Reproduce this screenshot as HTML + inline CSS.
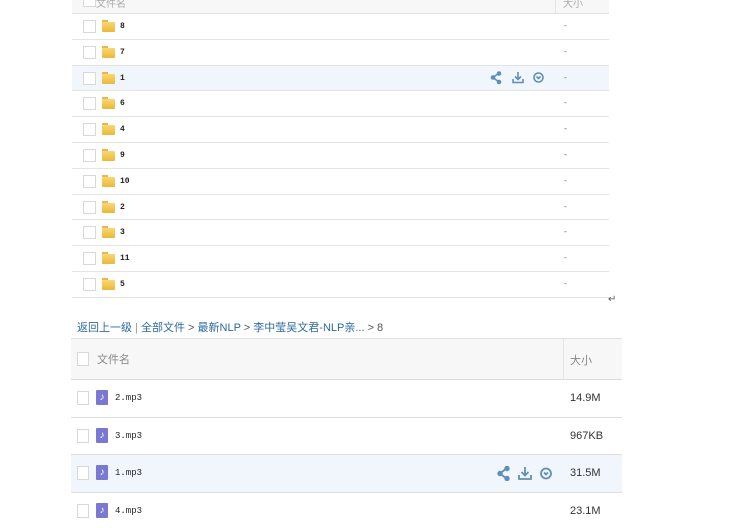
<!DOCTYPE html><html><head><meta charset="utf-8"><style>
body{margin:0;width:732px;height:529px;overflow:hidden;background:#fff;font-family:"Liberation Sans","Noto Sans CJK SC",sans-serif;position:relative}
.a{position:absolute}
.cb{position:absolute;width:11px;height:11px;border:1px solid #d8d8d8;background:#fff}
.fd{position:absolute;width:13px;height:10px;background:linear-gradient(#f9d774,#eab83a);border-radius:1px}
.fd:before{content:"";position:absolute;left:0;top:-2px;width:6px;height:2px;background:#e8b94a}
.t{position:absolute;font-size:8px;line-height:10px;color:#222;font-family:"Liberation Mono",monospace;font-weight:bold}
.line{position:absolute;height:1px;background:#e4e4e4}
.mu{position:absolute;width:12px;height:15px;background:#7b78d2;border-radius:1px;color:#fff;font-size:10px;line-height:15px;text-align:center}
</style></head><body>
<div class="a" style="left:72px;top:0;width:537px;height:13px;background:#f7f7f7;border-bottom:1px solid #e0e0e0"></div>
<div class="a" style="left:555px;top:0;width:1px;height:13px;background:#e6e6e6"></div>
<div class="a" style="left:96px;top:-5px;font-size:10px;color:#aaa">文件名</div>
<div class="a" style="left:563px;top:-5px;font-size:10px;color:#aaa">大小</div>
<div class="cb" style="left:83px;top:-6px"></div>
<div class="a" style="left:72px;top:66px;width:537px;height:25px;background:#f0f6fc"></div>
<div id="rows"></div>
<script>
var n=["8","7","1","6","4","9","10","2","3","11","5"],h="";
for(var i=0;i<11;i++){var y=13+i*25.8;var c=y+13;
h+='<div class="cb" style="left:83px;top:'+(c-6)+'px"></div><div class="fd" style="left:102px;top:'+(c-4)+'px"></div><div class="t" style="left:120px;top:'+(c-4)+'px">'+n[i]+'</div><div class="t" style="left:563px;top:'+(c-4)+'px;color:#666;font-weight:normal">-</div><div class="line" style="left:72px;width:537px;top:'+Math.round(y+25.8)+'px"></div>';}
document.getElementById('rows').innerHTML=h;
</script>
<svg class="a" style="left:490px;top:71px" width="60" height="14" viewBox="0 0 60 14" fill="none" stroke="#5f8fb8" stroke-width="1.6">
<path d="M9 2 L3 6.5 L9 11"/><circle cx="9" cy="2.5" r="1.5" fill="#5f8fb8"/><circle cx="3" cy="6.5" r="1.5" fill="#5f8fb8"/><circle cx="9" cy="11" r="1.5" fill="#5f8fb8"/>
<path d="M28 1 V8 M25 5.5 L28 8.5 L31 5.5 M23 8 V11.5 H33 V8"/>
<circle cx="48.5" cy="6.5" r="4.5"/><path d="M46.5 5.5 L48.5 7.5 L50.5 5.5"/>
</svg>
<div class="a" style="left:608px;top:294px;font-size:10px;color:#555">↵</div>
<div class="a" style="left:77px;top:319px;font-size:11px;color:#2c6aa0;white-space:nowrap">返回上一级<span style="color:#999"> | </span>全部文件 <span style="color:#555">&gt;</span> 最新NLP <span style="color:#555">&gt;</span> 李中莹吴文君-NLP亲... <span style="color:#555">&gt; 8</span></div>
<div class="a" style="left:71px;top:338px;width:551px;height:40px;background:#f7f7f7;border-top:1px solid #e0e0e0;border-bottom:1px solid #dcdcdc"></div>
<div class="a" style="left:563px;top:339px;width:1px;height:40px;background:#e6e6e6"></div>
<div class="cb" style="left:77px;top:352px;width:10px;height:12px"></div>
<div class="a" style="left:97px;top:351px;font-size:11px;color:#888">文件名</div>
<div class="a" style="left:570px;top:352px;font-size:11px;color:#888">大小</div>
<div class="a" style="left:71px;top:455px;width:551px;height:37px;background:#f0f6fc"></div>
<div id="r2"></div>
<script>
var f=[["2.mp3","14.9M"],["3.mp3","967KB"],["1.mp3","31.5M"],["4.mp3","23.1M"]],g="";
for(var i=0;i<4;i++){var y=379+i*37.7,c=y+19;
g+='<div class="cb" style="left:77px;top:'+(c-7)+'px;width:10px;height:12px"></div><div class="mu" style="left:96px;top:'+(c-8)+'px">♪</div><div class="t" style="left:115px;top:'+(c-5)+'px;font-size:9px;font-weight:normal">'+f[i][0]+'</div><div class="a" style="left:570px;top:'+(c-6)+'px;font-size:11px;line-height:12px;color:#333">'+f[i][1]+'</div>'+(i<3?'<div class="line" style="left:71px;width:551px;top:'+Math.round(y+37.7)+'px;background:#dedede"></div>':'');}
document.getElementById('r2').innerHTML=g;
</script>
<svg class="a" style="left:496px;top:466px" width="60" height="15" viewBox="0 0 60 15" fill="none" stroke="#5f8fb8" stroke-width="1.8">
<path d="M11 2 L4 7.5 L11 13"/><circle cx="11" cy="2.5" r="1.8" fill="#5f8fb8"/><circle cx="4" cy="7.5" r="1.8" fill="#5f8fb8"/><circle cx="11" cy="12.5" r="1.8" fill="#5f8fb8"/>
<path d="M29 1 V9 M25.5 6 L29 9.5 L32.5 6 M23 9 V13 H35 V9"/>
<circle cx="50" cy="7.5" r="5"/><path d="M48 6.5 L50 8.5 L52 6.5"/>
</svg>
</body></html>
